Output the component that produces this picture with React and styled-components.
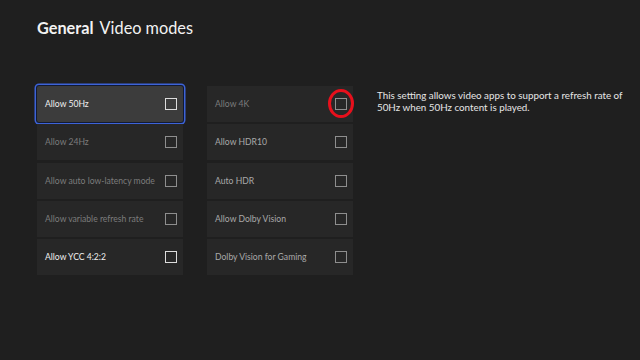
import React from "react";
import styled, { createGlobalStyle } from "styled-components";

const Global = createGlobalStyle`
  html, body {
    margin: 0;
    padding: 0;
    background: #1f1f1f;
  }
  body {
    font-family: Lato, "Noto Sans", sans-serif;
  }
`;

const Screen = styled.div`
  width: 640px;
  height: 360px;
  background: #1f1f1f;
  padding: 18px 0 0 37px;
  box-sizing: border-box;
`;

const Title = styled.h1`
  margin: 0;
  height: 24px;
  font-size: 16.3px;
  font-weight: 400;
  color: #f2f2f2;
  display: flex;
  gap: 6px;
  align-items: baseline;
  b {
    font-weight: 700;
  }
`;

const Body = styled.div`
  display: flex;
  margin-top: 44px;
  gap: 24px;
`;

const Column = styled.div`
  display: flex;
  flex-direction: column;
  gap: 2.3px;
  width: 146px;
`;

const Tile = styled.div`
  position: relative;
  height: 36px;
  box-sizing: border-box;
  display: flex;
  align-items: center;
  justify-content: space-between;
  padding: 0 6px 0 8px;
  background: ${(p) => (p.$focused ? "#3c3c3c" : "#272727")};
  color: ${(p) =>
    p.$tone === "bright" ? "#f0f0f0" : p.$tone === "mid" ? "#a9a9a9" : "#7c7c7c"};
  font-size: 8.6px;
  box-shadow: ${(p) =>
    p.$focused ? "0 0 0 1px #111a33, 0 0 0 2.5px #3d63d8" : "none"};
  border-radius: ${(p) => (p.$focused ? "2px" : "0")};
  white-space: nowrap;
`;

const Box = styled.span`
  width: 10px;
  height: 10px;
  border: 1px solid ${(p) => (p.$light ? "#dcdcdc" : "#8e8e8e")};
  flex: none;
`;

const Ring = styled.span`
  position: absolute;
  right: -1px;
  top: 3px;
  width: 20px;
  height: 23px;
  border: 3px solid #e8101c;
  border-radius: 50%;
`;

const Note = styled.p`
  margin: 3px 0 0 0;
  width: 254px;
  color: #e6e6e6;
  font-size: 9.8px;
  line-height: 12px;
`;

const left = [
  { label: "Allow 50Hz", tone: "bright", focused: true },
  { label: "Allow 24Hz", tone: "dim" },
  { label: "Allow auto low-latency mode", tone: "dim" },
  { label: "Allow variable refresh rate", tone: "dim" },
  { label: "Allow YCC 4:2:2", tone: "bright" },
];

const right = [
  { label: "Allow 4K", tone: "dim", ring: true },
  { label: "Allow HDR10", tone: "mid" },
  { label: "Auto HDR", tone: "mid" },
  { label: "Allow Dolby Vision", tone: "mid" },
  { label: "Dolby Vision for Gaming", tone: "mid" },
];

const Setting = ({ item }) => (
  <Tile $focused={item.focused} $tone={item.tone}>
    <span>{item.label}</span>
    <Box $light={item.tone === "bright"} />
    {item.ring && <Ring />}
  </Tile>
);

const App = () => {
  return (
    <Screen>
      <Global />
      <Title>
        <b>General</b>
        <span>Video modes</span>
      </Title>
      <Body>
        <Column>
          {left.map((item) => (
            <Setting key={item.label} item={item} />
          ))}
        </Column>
        <Column>
          {right.map((item) => (
            <Setting key={item.label} item={item} />
          ))}
        </Column>
        <Note>
          This setting allows video apps to support a refresh rate of 50Hz
          when 50Hz content is played.
        </Note>
      </Body>
    </Screen>
  );
};

export default App;
